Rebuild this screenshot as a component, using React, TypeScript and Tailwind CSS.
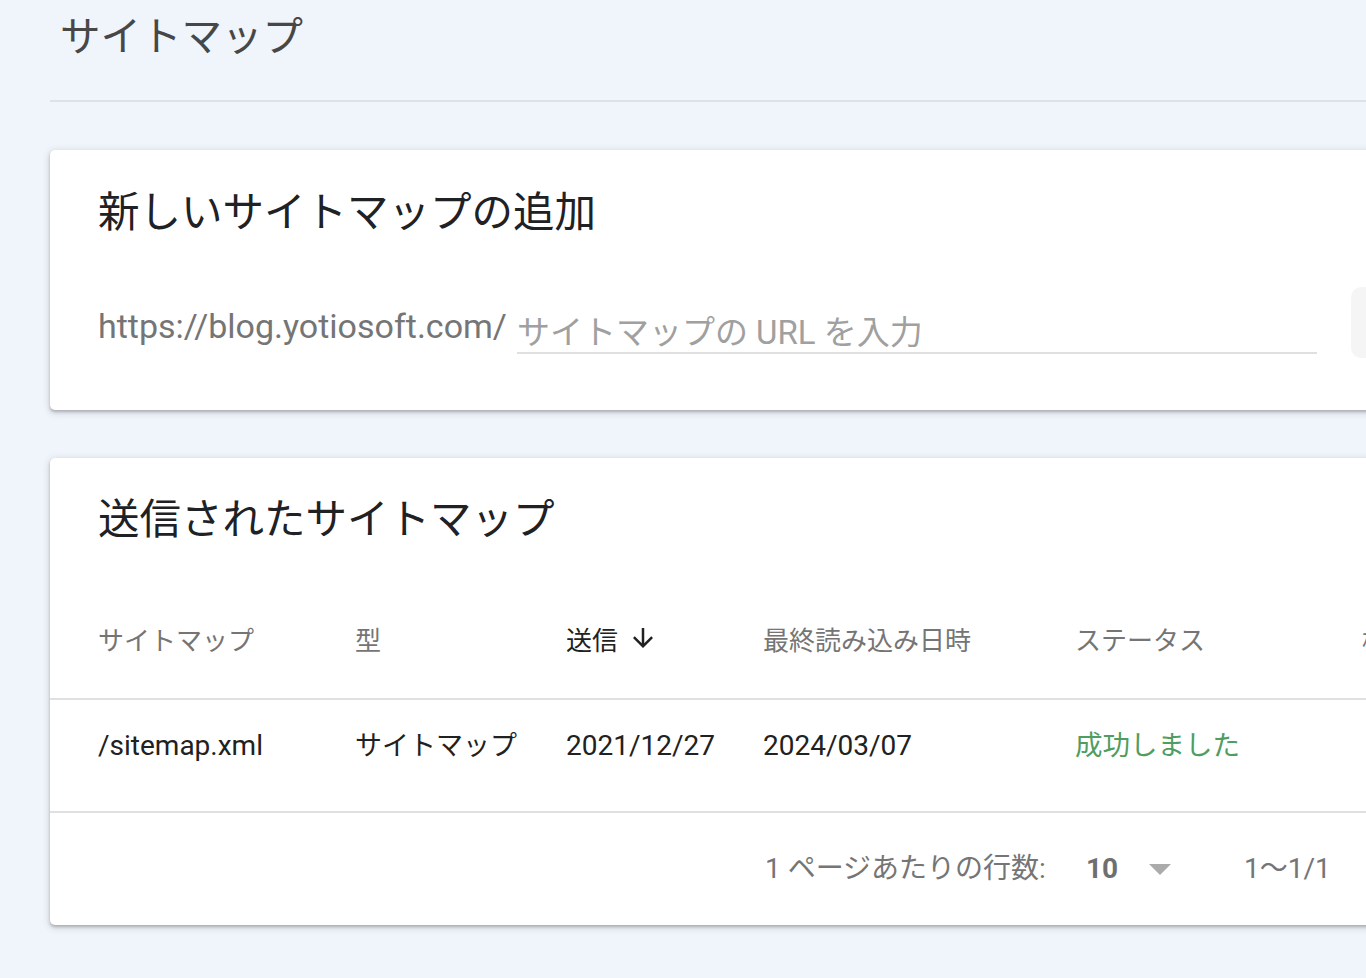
const headers = [
  { label: "サイトマップ", w: "w-[257px]" },
  { label: "型", w: "w-[211px]" },
  { label: "送信", w: "w-[197px]", sorted: true },
  { label: "最終読み込み日時", w: "w-[312px]" },
  { label: "ステータス", w: "w-[287px]" },
  { label: "検出されたページ", w: "w-[300px]" },
];

const rows = [
  {
    path: "/sitemap.xml",
    type: "サイトマップ",
    sent: "2021/12/27",
    read: "2024/03/07",
    status: "成功しました",
  },
];

function SortArrow() {
  return (
    <svg viewBox="0 0 24 24" className="w-[30px] h-[30px] ml-[10px] -mt-[6px]" fill="#212121">
      <path d="M20 12l-1.41-1.41L13 16.17V4h-2v12.17l-5.58-5.59L4 12l8 8 8-8z" />
    </svg>
  );
}

export default function App() {
  return (
    <div className="w-[1366px] h-[978px] overflow-hidden bg-[#f0f4fb] font-[Roboto,'Noto_Sans_CJK_JP',sans-serif]">
      <div className="w-[1500px] pl-[50px] pt-[17px]">
        {/* page header */}
        <h1 className="pl-[10px] text-[40.5px] leading-[40px] text-[#474747] font-normal">サイトマップ</h1>
        <div className="mt-[43px] h-[2px] bg-[#dfe1e5]"></div>

        {/* add sitemap */}
        <section className="mt-[48px] bg-white rounded-[5px] shadow-[0_2px_3px_rgba(60,64,67,0.3),0_2px_6px_2px_rgba(60,64,67,0.12)] pl-[48px] pt-[42px] pb-[52px]">
          <h2 className="text-[41.5px] leading-[42px] text-[#202124] font-normal">新しいサイトマップの追加</h2>
          <div className="mt-[53px] h-[71px] flex items-end">
            <div className="flex items-end mb-[4px]">
              <span className="text-[34px] leading-[34px] text-[#757575] mb-[11px]">https://blog.yotiosoft.com/</span>
              <input
                className="ml-[10px] w-[800px] h-[42px] text-[33px] leading-[40px] border-b-2 border-[#e0e0e0] outline-none text-[#212121] placeholder:text-[#a0a0a0]"
                placeholder="サイトマップの URL を入力"
              />
            </div>
            <button className="ml-[34px] w-[150px] h-[71px] rounded-[10px] bg-[#f5f5f5] text-[28px] text-[#bdbdbd]">送信</button>
          </div>
        </section>

        {/* submitted sitemaps */}
        <section className="mt-[48px] bg-white rounded-[5px] shadow-[0_2px_3px_rgba(60,64,67,0.3),0_2px_6px_2px_rgba(60,64,67,0.12)] pt-[41px]">
          <h2 className="pl-[48px] text-[41.5px] leading-[42px] text-[#202124] font-normal">送信されたサイトマップ</h2>

          <div className="mt-[43px] h-[116px] pl-[48px] flex items-center border-b-2 border-[#e0e0e0]">
            {headers.map((h) => (
              <div key={h.label} className={`${h.w} shrink-0 flex items-center text-[26px] leading-[26px] ${h.sorted ? "text-[#212121]" : "text-[#757575]"}`}>
                {h.label}
                {h.sorted && <SortArrow />}
              </div>
            ))}
          </div>

          {rows.map((r) => (
            <div key={r.path} className="h-[113px] pl-[48px] pt-[32px] flex items-start border-b-2 border-[#e0e0e0] text-[28px] leading-[28px] text-[#212121]">
              <div className="w-[257px] shrink-0">{r.path}</div>
              <div className="w-[211px] shrink-0 text-[27px]">{r.type}</div>
              <div className="w-[197px] shrink-0">{r.sent}</div>
              <div className="w-[312px] shrink-0">{r.read}</div>
              <div className="w-[287px] shrink-0 text-[27.5px] text-[#4f9d60]">{r.status}</div>
            </div>
          ))}

          <div className="h-[112px] pl-[715px] flex items-center text-[28px] leading-[28px] text-[#757575]">
            <span>1 ページあたりの行数:</span>
            <span className="ml-[40px] font-bold text-[#6f6f6f]">10</span>
            <svg viewBox="0 0 22 11" className="ml-[31px] w-[22px] h-[11px]">
              <polygon points="0,0 22,0 11,11" fill="#ababab" />
            </svg>
            <span className="ml-[73px]">1〜1/1</span>
          </div>
        </section>
      </div>
    </div>
  );
}
